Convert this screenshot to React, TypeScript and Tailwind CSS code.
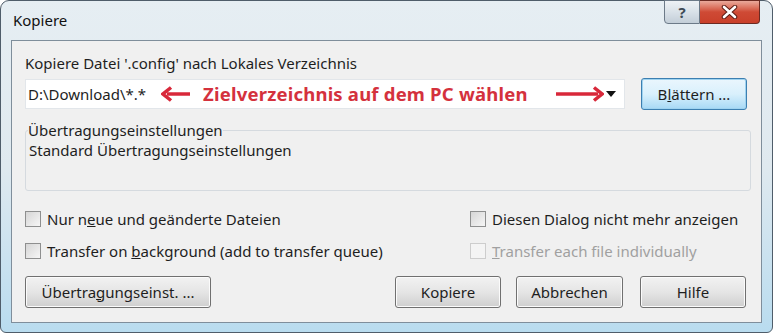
import React from 'react';

const font = { fontFamily: '"Noto Sans", "Open Sans", sans-serif' };

function Checkbox({ label, disabled }: { label: React.ReactNode; disabled?: boolean }) {
  return (
    <div className={`flex items-center gap-[6px] text-[15px] ${disabled ? 'text-[#a0a0a0]' : 'text-[#1e1e1e]'}`}>
      <div
        className={`w-[16px] h-[16px] border ${disabled ? 'border-[#cdcdcd] bg-[#f4f4f4]' : 'border-[#8e8f8f] bg-gradient-to-br from-[#d6d6d6] to-[#f6f6f6]'}`}
      />
      <span>{label}</span>
    </div>
  );
}

function Button({ children, className = '', focused }: { children: React.ReactNode; className?: string; focused?: boolean }) {
  return (
    <div
      className={`h-[32px] rounded-[3px] border flex items-center justify-center text-[15px] text-[#1e1e1e] ${
        focused
          ? 'border-[#3c7fb1] bg-gradient-to-b from-[#eaf6fd] via-[#d9f0fc] to-[#a7d9f5] shadow-[inset_0_0_0_1px_#9fd3f0]'
          : 'border-[#707070] bg-gradient-to-b from-[#f2f2f2] via-[#e5e5e5] to-[#cfcfcf] shadow-[inset_0_0_0_1px_#fbfbfb]'
      } ${className}`}
    >
      {children}
    </div>
  );
}

export default function App() {
  return (
    <div className="w-[773px] h-[333px] bg-white" style={font}>
      <div className="w-[773px] h-[333px] rounded-t-[9px] rounded-b-[6px] border border-[#4f5d6a] bg-gradient-to-b from-[#e6eef3] via-[#dfe9ef] to-[#b9dcef] flex flex-col">
        {/* Title bar */}
        <div className="h-[39px] flex items-start relative">
          <span className="ml-[12px] mt-[8px] text-[15px] text-[#111]">Kopiere</span>
          <div className="absolute right-[12px] top-[-1px] flex">
            <div className="w-[36px] h-[24px] rounded-bl-[4px] border border-[#6c7a88] bg-gradient-to-b from-[#eef2f5] via-[#d9e1e8] to-[#c3ced8] flex items-center justify-center text-[15px] font-bold text-[#3d4a56]">
              ?
            </div>
            <div className="w-[60px] h-[24px] rounded-br-[4px] border border-l-0 border-[#6b2a22] bg-gradient-to-b from-[#e9a99b] via-[#cf4a35] to-[#c9402a] flex items-center justify-center">
              <svg width="17" height="14" viewBox="0 0 17 14">
                <path d="M3 2 L14 12 M14 2 L3 12" stroke="#5a1c14" strokeWidth="4.5" strokeLinecap="round" />
                <path d="M3 2 L14 12 M14 2 L3 12" stroke="#ffffff" strokeWidth="2.6" strokeLinecap="round" />
              </svg>
            </div>
          </div>
        </div>

        {/* Client area */}
        <div className="mx-[10px] h-[283px] border border-[#7f8e9b] bg-[#f0f0f0] pl-[13px] pr-[11px] flex flex-col">
          <div className="mt-[12px] text-[15px] text-[#1e1e1e] leading-[20px]">
            Kopiere Datei '.config' nach Lokales Verzeichnis
          </div>

          <div className="mt-[5px] flex items-center">
            <div className="w-[600px] h-[30px] bg-white border border-[#e2e6ea] flex items-center pl-[2px] pr-[6px]">
              <span className="text-[15px] text-[#1e1e1e]">D:\Download\*.*</span>
              <svg className="ml-[15px]" width="30" height="16" viewBox="0 0 30 16">
                <path d="M29 8 H6" stroke="#d8283a" strokeWidth="3.5" />
                <path d="M10 1.5 L2 8 L10 14.5" stroke="#d8283a" strokeWidth="3.5" fill="none" strokeLinejoin="miter" />
              </svg>
              <span className="ml-[12px] text-[18.5px] font-bold text-[#d4313d] tracking-[0.2px]">
                Zielverzeichnis auf dem PC wählen
              </span>
              <svg className="ml-[28px]" width="48" height="16" viewBox="0 0 48 16">
                <path d="M0 8 H42" stroke="#d8283a" strokeWidth="3.5" />
                <path d="M38 1.5 L46 8 L38 14.5" stroke="#d8283a" strokeWidth="3.5" fill="none" />
              </svg>
              <svg className="ml-[2px]" width="10" height="6" viewBox="0 0 10 6">
                <path d="M0 0 H10 L5 6 Z" fill="#111" />
              </svg>
            </div>
            <Button focused className="ml-[16px] w-[106px] h-[31px]">
              B<span className="underline">l</span>ättern ...
            </Button>
          </div>

          <fieldset className="mt-[11px] h-[70px] w-[726px] border border-[#d5dadf] rounded-[3px] px-[3px] pb-0">
            <legend className="text-[15px] text-[#1e1e1e] leading-[18px] px-0 ml-[-1px]">Übertragungseinstellungen</legend>
            <div className="text-[15px] text-[#1e1e1e] leading-[20px] mt-[1px]">Standard Übertragungseinstellungen</div>
          </fieldset>

          <div className="mt-[17px] flex h-[22px] items-center">
            <div className="w-[445px]">
              <Checkbox label={<>Nur n<span className="underline">e</span>ue und geänderte Dateien</>} />
            </div>
            <Checkbox label="Diesen Dialog nicht mehr anzeigen" />
          </div>

          <div className="mt-[10px] flex h-[22px] items-center">
            <div className="w-[445px]">
              <Checkbox label={<>Transfer on <span className="underline">b</span>ackground (add to transfer queue)</>} />
            </div>
            <Checkbox disabled label={<><span className="underline">T</span>ransfer each file individually</>} />
          </div>

          <div className="mt-[14px] flex items-center">
            <Button className="w-[186px]">
              Übertra<span className="underline">g</span>ungseinst. ...
            </Button>
            <Button className="ml-[184px] w-[106px]">Kopiere</Button>
            <Button className="ml-[15px] w-[107px]">Abbrechen</Button>
            <Button className="ml-[17px] w-[106px]">Hilfe</Button>
          </div>
        </div>
      </div>
    </div>
  );
}
